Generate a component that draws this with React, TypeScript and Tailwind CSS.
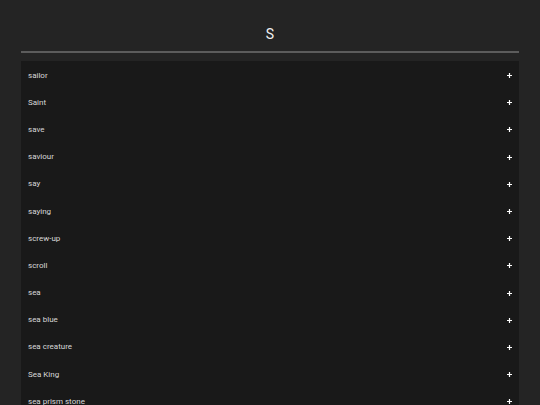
import React from "react"

const words = [
  "sailor",
  "Saint",
  "save",
  "saviour",
  "say",
  "saying",
  "screw-up",
  "scroll",
  "sea",
  "sea blue",
  "sea creature",
  "Sea King",
  "sea prism stone",
  "sea train",
]

const Plus = () => (
  <svg width="5" height="5" viewBox="0 0 5 5" className="shrink-0">
    <path d="M2.5 0v5M0 2.5h5" stroke="#ffffff" strokeWidth="1.2" />
  </svg>
)

export default function App() {
  return (
    <div className="h-[405px] overflow-hidden bg-[#242424] px-[21px] font-['Roboto','Liberation_Sans',sans-serif]">
      <h1 className="pt-[25px] h-[51px] text-center text-[14px] leading-[18px] font-normal text-[#f0f0f0]">
        S
      </h1>
      <div className="h-[2px] bg-[#5c5c5c]" />
      <ul className="mt-[8px] pt-[1px] bg-[#191919]">
        {words.map((w) => (
          <li
            key={w}
            className="flex h-[27.2px] items-center justify-between px-[7px] text-[8px] text-[#d8d8d8]"
          >
            <span>{w}</span>
            <Plus />
          </li>
        ))}
      </ul>
    </div>
  )
}
